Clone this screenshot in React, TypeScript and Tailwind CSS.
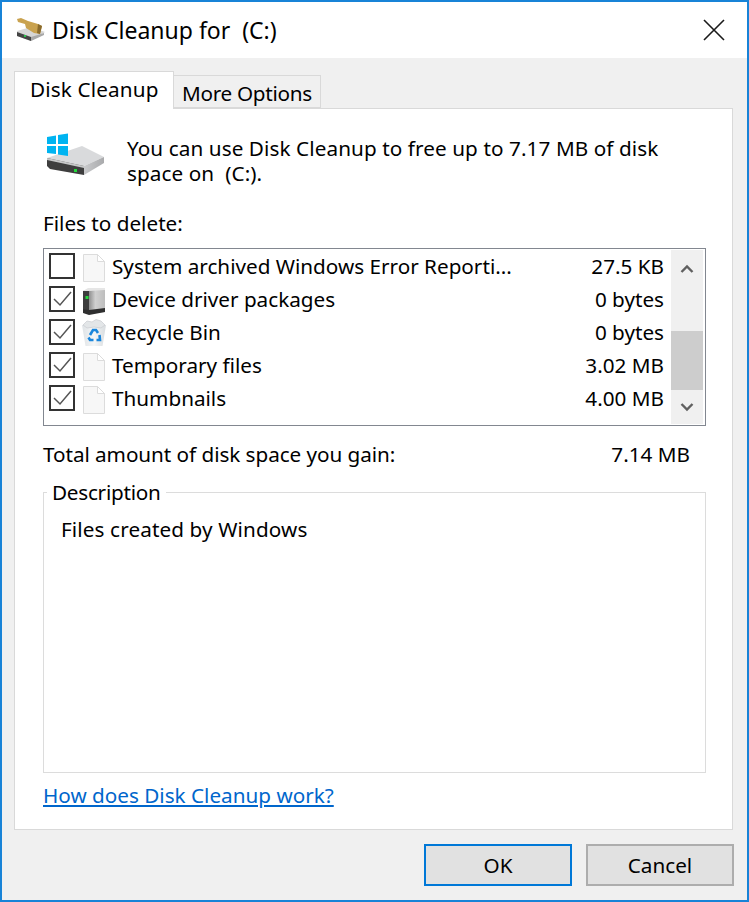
import React from "react";

const font = { fontFamily: '"Noto Sans", "Open Sans", sans-serif' };

function FileIcon() {
  return (
    <svg width="24" height="30" viewBox="0 0 24 30" className="shrink-0">
      <path d="M1.5 1.5H15.5L22.5 8.5V28.5H1.5Z" fill="#f7f7f7" stroke="#dcdcdc" />
      <path d="M15.5 1.5V8.5H22.5Z" fill="#ffffff" stroke="#dcdcdc" />
    </svg>
  );
}

function ServerIcon() {
  return (
    <svg width="24" height="30" viewBox="0 0 24 30" className="shrink-0">
      <defs>
        <linearGradient id="srv" x1="0" y1="0" x2="1" y2="0">
          <stop offset="0" stopColor="#8f8f8f" />
          <stop offset="0.4" stopColor="#d0d0d0" />
          <stop offset="1" stopColor="#bdbdbd" />
        </linearGradient>
      </defs>
      <path d="M7 3H23V26L7 28Z" fill="url(#srv)" />
      <path d="M1 5L7 4V28L1 26Z" fill="#3c3c3c" />
      <path d="M1 5L6 2H23V4L7 5Z" fill="#e6e6e6" />
      <path d="M1 23L7 24L23 22V26L7 29L1 27Z" fill="#2f2f2f" />
      <rect x="3.5" y="10" width="3" height="3" fill="#22d83a" />
    </svg>
  );
}

function BinIcon() {
  return (
    <svg width="26" height="28" viewBox="0 0 26 28" className="shrink-0">
      <defs>
        <linearGradient id="bin" x1="0" y1="0" x2="1" y2="0">
          <stop offset="0" stopColor="#dfe3e6" />
          <stop offset="0.5" stopColor="#f4f6f7" />
          <stop offset="1" stopColor="#d8dcdf" />
        </linearGradient>
      </defs>
      <path d="M1 6L25 6L21.5 27H4.5Z" fill="url(#bin)" />
      <path d="M2 6L6 2L11 3L15 0.5L20 2L24 6L20 9L13 8L6 9Z" fill="#e3e6e8" stroke="#c8ccd0" strokeWidth="0.7" />
      <path d="M9 16L12 11H15L17 14" fill="none" stroke="#1a86dc" strokeWidth="2.6" />
      <path d="M18.5 16L19 21L15.5 21" fill="none" stroke="#1a86dc" strokeWidth="2.6" />
      <path d="M12.5 21H9L7.5 18.5" fill="none" stroke="#1a86dc" strokeWidth="2.6" />
    </svg>
  );
}

function Check({ checked }: { checked: boolean }) {
  return (
    <div className="flex h-[26px] w-[26px] shrink-0 items-center justify-center border-2 border-[#333333] bg-white">
      {checked && (
        <svg width="22" height="22" viewBox="0 0 22 22">
          <path d="M3 11L9 17L20 4" fill="none" stroke="#555555" strokeWidth="1.5" />
        </svg>
      )}
    </div>
  );
}

function DriveIcon() {
  return (
    <svg width="60" height="44" viewBox="0 0 60 44" className="shrink-0">
      <defs>
        <linearGradient id="side" x1="0" y1="0" x2="1" y2="0">
          <stop offset="0" stopColor="#c9cacc" />
          <stop offset="1" stopColor="#a9aaac" />
        </linearGradient>
      </defs>
      <path d="M1 25L36 13L58 24L38 33Z" fill="#d9dadc" />
      <path d="M38 33L58 24V30L38 42Z" fill="url(#side)" />
      <path d="M1 25L38 33V42L4 36L1 33Z" fill="#3e3e3e" />
      <path d="M1 25L38 33V35L1 27Z" fill="#c6c7c8" />
      <rect x="28" y="36" width="3" height="3" fill="#22d83a" />
      <path d="M1 4L10 2.5V11H1ZM12 2L22 0.5V11H12ZM1 13H10V21L1 20ZM12 13H22V23L12 21.5Z" fill="#00b4f1" />
    </svg>
  );
}

function BroomIcon() {
  return (
    <svg width="30" height="24" viewBox="0 0 30 24" className="shrink-0">
      <path d="M1 13L15 9L29 14L15 23L1 18Z" fill="#d6d6d6" />
      <path d="M1 14L15 19V23L1 18Z" fill="#444444" />
      <path d="M15 19L28 15V17L15 23Z" fill="#a8a8a8" />
      <rect x="8" y="17" width="2" height="2" fill="#27c24c" />
      <path d="M1 1L5 0L12 3L22 6L26 8L24 16L18 15L10 10L9 6L2 4Z" fill="#c9a24f" />
      <path d="M22 6L26 8L24 16L21 15Z" fill="#8a6b2d" />
    </svg>
  );
}

const rows: { name: string; size: string; checked: boolean; icon: React.ReactNode }[] = [
  { name: "System archived Windows Error Reporti...", size: "27.5 KB", checked: false, icon: <FileIcon /> },
  { name: "Device driver packages", size: "0 bytes", checked: true, icon: <ServerIcon /> },
  { name: "Recycle Bin", size: "0 bytes", checked: true, icon: <BinIcon /> },
  { name: "Temporary files", size: "3.02 MB", checked: true, icon: <FileIcon /> },
  { name: "Thumbnails", size: "4.00 MB", checked: true, icon: <FileIcon /> },
];

export default function App() {
  return (
    <div
      style={font}
      className="flex h-[902px] w-[749px] flex-col overflow-hidden border-2 border-[#1883d7] bg-[#f0f0f0] text-[20.7px] leading-[25px] text-black"
    >
      <div className="flex h-[56px] shrink-0 items-center bg-white pl-[14px]">
        <BroomIcon />
        <span className="ml-[6px] whitespace-pre text-[23px]">Disk Cleanup for  (C:)</span>
        <svg width="22" height="22" viewBox="0 0 22 22" className="ml-auto mr-[22px]">
          <path d="M1 1L21 21M21 1L1 21" stroke="#1a1a1a" strokeWidth="1.6" />
        </svg>
      </div>

      <div className="flex flex-1 flex-col px-[12px] pt-[13px]">
        <div className="relative z-10 flex h-[37px] items-end">
          <div className="-mb-px flex h-[38px] w-[160px] items-center border border-b-0 border-[#d9d9d9] bg-white pb-[2px] pl-[15px] tracking-[0.15px]">
            Disk Cleanup
          </div>
          <div className="flex h-[33px] w-[147px] items-center border border-l-0 border-[#d9d9d9] bg-[#f0f0f0] pl-[8px] pt-[3px] tracking-[-0.3px]">
            More Options
          </div>
        </div>

        <div className="flex h-[722px] w-[719px] flex-col border border-[#d9d9d9] bg-white pl-[28px] pr-[26px]">
          <div className="ml-[3px] mt-[24px] flex">
            <DriveIcon />
            <p className="ml-[21px] mt-[3px] w-[545px] whitespace-pre-wrap tracking-[0.09px]">
              {"You can use Disk Cleanup to free up to 7.17 MB of disk space on  (C:)."}
            </p>
          </div>

          <div className="mt-[25px] h-[25px]">Files to delete:</div>

          <div className="mt-[12px] flex h-[178px] w-[663px] border border-[#828790] bg-white py-px pl-[5px] pr-[2px]">
            <div className="flex-1 pt-[3px]">
              {rows.map((r) => (
                <div key={r.name} className="flex h-[33px] items-start">
                  <Check checked={r.checked} />
                  <div className="ml-[7px] flex h-[30px] w-[24px] items-start justify-center">{r.icon}</div>
                  <span className="ml-[6px] flex-1 leading-[26px]">{r.name}</span>
                  <span className="mr-[7px] leading-[26px]">{r.size}</span>
                </div>
              ))}
            </div>
            <div className="flex w-[32px] flex-col items-center bg-[#f0f0f0]">
              <div className="flex h-[38px] items-center justify-center">
                <svg width="14" height="10" viewBox="0 0 14 10">
                  <path d="M1.5 8L7 2.5L12.5 8" fill="none" stroke="#606060" strokeWidth="2.4" />
                </svg>
              </div>
              <div className="mt-[43px] h-[59px] w-full bg-[#cdcdcd]" />
              <div className="flex h-[34px] items-center justify-center">
                <svg width="14" height="10" viewBox="0 0 14 10">
                  <path d="M1.5 2L7 7.5L12.5 2" fill="none" stroke="#606060" strokeWidth="2.4" />
                </svg>
              </div>
            </div>
          </div>

          <div className="mt-[16px] flex w-[647px] justify-between">
            <span className="tracking-[-0.05px]">Total amount of disk space you gain:</span>
            <span>7.14 MB</span>
          </div>

          <div className="relative mt-[25px] h-[281px] w-[663px] border border-[#dcdcdc] pl-[17px] pt-[24px]">
            <span className="absolute -top-[13px] left-[3px] bg-white px-[5px] tracking-[-0.25px]">Description</span>
            <span className="tracking-[0.12px]">Files created by Windows</span>
          </div>

          <a className="mt-[10px] self-start text-[#0066cc] underline" href="#">
            How does Disk Cleanup work?
          </a>
        </div>

        <div className="mt-[14px] flex justify-end gap-[14px]">
          <button className="flex h-[42px] w-[148px] items-center justify-center border-2 border-[#0078d7] bg-[#e1e1e1]">
            OK
          </button>
          <button className="mr-[1px] flex h-[42px] w-[148px] items-center justify-center border-2 border-[#adadad] bg-[#e1e1e1]">
            Cancel
          </button>
        </div>
      </div>
    </div>
  );
}
